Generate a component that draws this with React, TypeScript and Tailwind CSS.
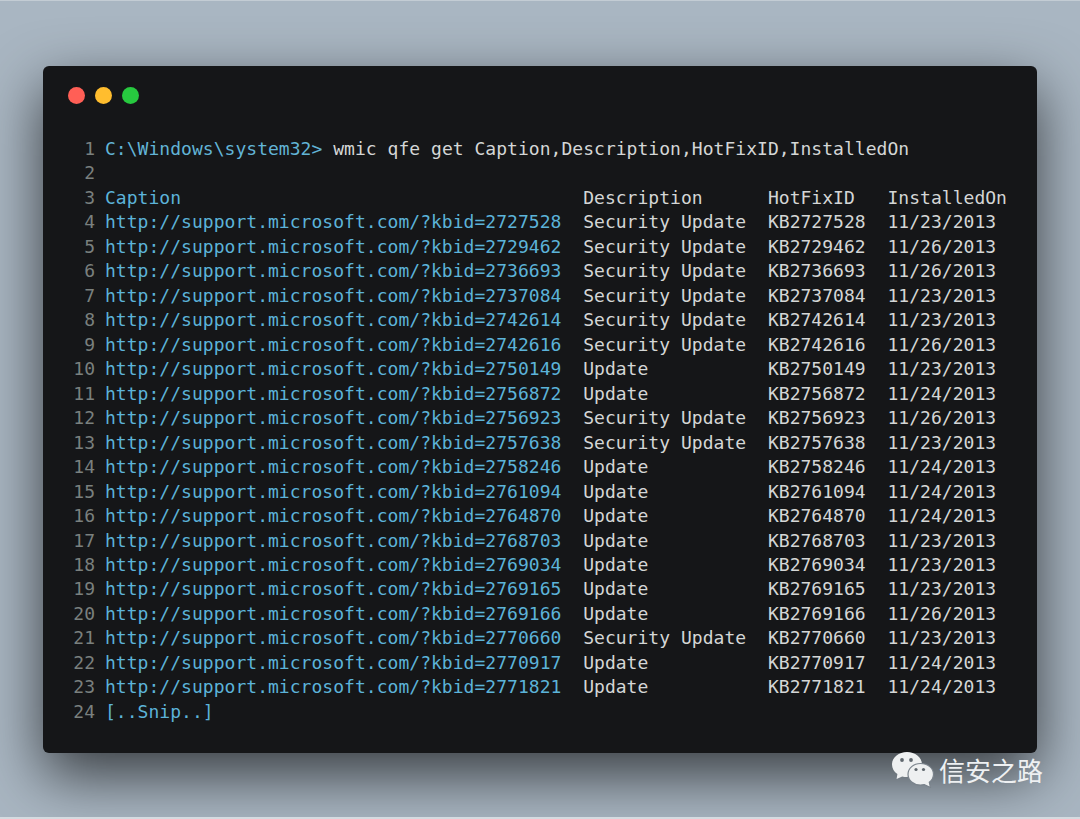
const MONO = 'font-["DejaVu_Sans_Mono",monospace]';

type Row = [string, string, string];

const ROWS: Row[] = [
  ['2727528', 'Security Update', '11/23/2013'],
  ['2729462', 'Security Update', '11/26/2013'],
  ['2736693', 'Security Update', '11/26/2013'],
  ['2737084', 'Security Update', '11/23/2013'],
  ['2742614', 'Security Update', '11/23/2013'],
  ['2742616', 'Security Update', '11/26/2013'],
  ['2750149', 'Update', '11/23/2013'],
  ['2756872', 'Update', '11/24/2013'],
  ['2756923', 'Security Update', '11/26/2013'],
  ['2757638', 'Security Update', '11/23/2013'],
  ['2758246', 'Update', '11/24/2013'],
  ['2761094', 'Update', '11/24/2013'],
  ['2764870', 'Update', '11/24/2013'],
  ['2768703', 'Update', '11/23/2013'],
  ['2769034', 'Update', '11/23/2013'],
  ['2769165', 'Update', '11/23/2013'],
  ['2769166', 'Update', '11/26/2013'],
  ['2770660', 'Security Update', '11/23/2013'],
  ['2770917', 'Update', '11/24/2013'],
  ['2771821', 'Update', '11/24/2013'],
];

function Line({ n, children }: { n: number; children?: React.ReactNode }) {
  return (
    <div className="flex h-[24.47px] items-center">
      <span className="w-[52px] shrink-0 text-right text-[#7a807e]">{n}</span>
      <span className="ml-[10px] whitespace-pre">{children}</span>
    </div>
  );
}

function WeChatLogo() {
  return (
    <svg width="43" height="37" viewBox="0 0 43 37" className="shrink-0">
      <path d="M16 1C7.7 1 1 6.600 1 13.500c0 3.900 2.100 7.300 5.400 9.600L5.600 28l5.600-2.600c1.500.4 3.100.6 4.800.6 8.300 0 15-5.600 15-12.500S24.300 1 16 1z" fill="#eef0f1" />
      <path d="M29.500 12.500c-6.900 0-12.500 4.800-12.500 10.800s5.600 10.800 12.500 10.800c1.300 0 2.600-.2 3.800-.5l6.200 2.900-1.200-5.200c2.700-2 4.200-4.800 4.200-8 0-6-5.600-10.800-13-10.800z" fill="#eef0f1" stroke="#7a838c" strokeWidth="1.200" />
      <circle cx="11" cy="9" r="1.900" fill="#5f676e" />
      <circle cx="20" cy="9" r="1.900" fill="#5f676e" />
      <circle cx="25" cy="18.500" r="1.600" fill="#5f676e" />
      <circle cx="32.500" cy="18.500" r="1.600" fill="#5f676e" />
    </svg>
  );
}

export default function App() {
  return (
    <div className="relative h-[819px] w-[1080px] overflow-hidden bg-[#a9b6c2]">
      <div className="h-[817px] pt-[66px] pl-[43px]">
        <div className="h-[687px] w-[994px] rounded-[6px] bg-[#151618] pt-[21px] shadow-[0_22px_60px_rgba(0,0,0,0.68)]">
          <div className="flex gap-[10px] pl-[25px]">
            <span className="h-[17px] w-[17px] rounded-full bg-[#ff5f56]" />
            <span className="h-[17px] w-[17px] rounded-full bg-[#ffbd2e]" />
            <span className="h-[17px] w-[17px] rounded-full bg-[#27c93f]" />
          </div>
          <div className={`mt-[33px] text-[18px] leading-[24.47px] tracking-[0.03px] text-[#d4d6d6] ${MONO}`}>
            <Line n={1}>
              <span className="text-[#62b4d6]">{'C:\\Windows\\system32>'}</span>
              {' wmic qfe get Caption,Description,HotFixID,InstalledOn'}
            </Line>
            <Line n={2} />
            <Line n={3}>
              <span className="text-[#5cb3d9]">{'Caption'.padEnd(44)}</span>
              {'Description'.padEnd(17)}
              {'HotFixID'.padEnd(11)}
              InstalledOn
            </Line>
            {ROWS.map(([kb, desc, date], i) => (
              <Line key={kb} n={i + 4}>
                <span className="text-[#5cb3d9]">{`http://support.microsoft.com/?kbid=${kb}`.padEnd(44)}</span>
                {desc.padEnd(17)}
                {`KB${kb}`.padEnd(11)}
                {date}
              </Line>
            ))}
            <Line n={24}>
              <span className="text-[#5cb3d9]">[..Snip..]</span>
            </Line>
          </div>
        </div>
      </div>
      {/* light rows along the picture's edges */}
      <div className="absolute inset-x-0 top-0 h-px bg-[#c3ccd4]" />
      <div className="absolute inset-x-0 bottom-0 h-[2px] bg-[#d5dbe0]" />
      {/* watermark */}
      <div className="absolute top-[751px] left-[891px] flex items-center gap-[5px]">
        <WeChatLogo />
        <span className="font-['Noto_Sans_CJK_SC',sans-serif] text-[26px] leading-[36px] text-[#eef0f2]">信安之路</span>
      </div>
    </div>
  );
}
